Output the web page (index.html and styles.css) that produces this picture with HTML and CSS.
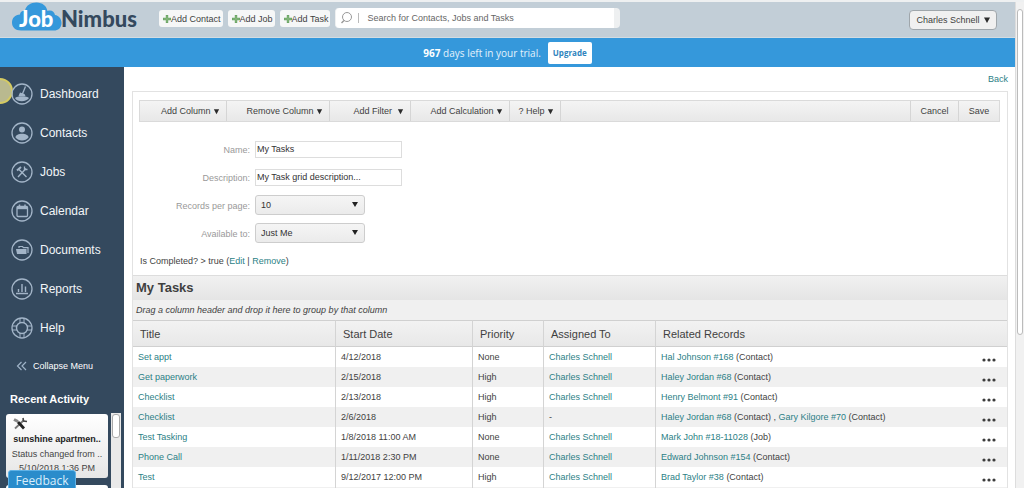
FILE: index.html
```html
<!DOCTYPE html>
<html lang="en">
<head>
<meta charset="utf-8">
<title>JobNimbus - My Tasks</title>
<link rel="stylesheet" href="styles.css">
</head>
<body>
<svg class="defs" aria-hidden="true">
  <symbol id="plus" viewBox="0 0 10 10"><path d="M5 0v10M0 5h10" stroke="#6aa564" stroke-width="3"/><path d="M5 1v8M1 5h8" stroke="#8fbc85" stroke-width="1"/></symbol>
  <symbol id="down" viewBox="0 0 8 8"><path d="M1 1.5h6L4 7z" fill="#2b2b2b"/></symbol>
  <symbol id="dots" viewBox="0 0 14 4"><g fill="#3c3c3c"><circle cx="2" cy="2" r="1.6"/><circle cx="7" cy="2" r="1.6"/><circle cx="12" cy="2" r="1.6"/></g></symbol>
</svg>
<div class="app">
  <div class="page">
    <header class="topbar">
      <a class="logo" href="#" aria-label="JobNimbus">
        <svg width="132" height="34" viewBox="0 0 132 34">
          <path d="M10 28.500C4 28.500 1 25 1 20.500C1 16 4 13 9 12.500C9 10 11 8.500 14 8.700C15 3.500 19.500 .5 25.500 .5C31.500 .5 35.500 4 36.500 9C40 7.500 43.500 9.500 44 13C48 13.500 50.500 17 50.500 21C50.500 26 47 28.500 43 28.500Z" fill="#3598db"/>
          <text class="logo-job" x="8" y="25">Job</text>
          <text class="logo-nimbus" x="50" y="25">Nimbus</text>
        </svg>
      </a>
      <div class="quick">
        <button class="quick-btn" type="button"><svg width="8" height="8"><use href="#plus"/></svg>Add Contact</button>
        <button class="quick-btn" type="button"><svg width="8" height="8"><use href="#plus"/></svg>Add Job</button>
        <button class="quick-btn" type="button"><svg width="8" height="8"><use href="#plus"/></svg>Add Task</button>
      </div>
      <label class="search">
        <svg width="22" height="14" viewBox="0 0 22 14" fill="none" stroke="#999"><circle cx="7" cy="6" r="4.500"/><path d="M4 9.500L1.500 12" stroke-width="1.500"/><path d="M18.500 2v10" stroke="#bbb"/></svg>
        <input type="text" placeholder="Search for Contacts, Jobs and Tasks" aria-label="Search">
      </label>
      <button class="user" type="button">Charles Schnell <svg width="8" height="8"><use href="#down"/></svg></button>
    </header>
    <div class="trial">
      <span><b>967</b> days left in your trial.</span>
      <button class="upgrade" type="button">Upgrade</button>
    </div>
    <div class="body">
      <aside class="sidebar">
        <span class="glow"></span>
        <nav class="nav">
          <a href="#"><svg class="ico" viewBox="0 0 22 22"><circle class="ring" cx="11" cy="11" r="10"/><path d="M14.500 3.500L11 12" stroke-width="1.300"/><path class="fill" d="M9 9.500l4.500 1.500 1 2H7.500zM4 15c2-2.500 12-2.500 14 0-2 4-12 4.500-14 0z"/></svg>Dashboard</a>
          <a href="#"><svg class="ico" viewBox="0 0 22 22"><circle class="ring" cx="11" cy="11" r="10"/><circle class="fill" cx="11" cy="7.500" r="3"/><path class="fill" d="M4.500 15.500c0-5 13-5 13 0-3 4-10 4-13 0z"/></svg>Contacts</a>
          <a href="#"><svg class="ico" viewBox="0 0 22 22"><circle class="ring" cx="11" cy="11" r="10"/><path d="M7 16l8-8.500M8 8.500l7.500 7.500" stroke-width="1.400"/><path d="M6 9.500l4-3.500" stroke-width="2"/><path d="M13.500 5.500v3h3" stroke-width="1.300"/></svg>Jobs</a>
          <a href="#"><svg class="ico" viewBox="0 0 22 22"><circle class="ring" cx="11" cy="11" r="10"/><rect x="6" y="6.500" width="10.500" height="10" rx="1" stroke-width="1.300"/><path d="M6 8h10.500" stroke-width="2.400"/><path d="M8.500 4.500v3M14 4.500v3" stroke-width="1.500"/></svg>Calendar</a>
          <a href="#"><svg class="ico" viewBox="0 0 22 22"><circle class="ring" cx="11" cy="11" r="10"/><path d="M8 9V7.500h3.500l1 1.200H17V14" stroke-width="1.200"/><path class="fill" d="M5 10h10.500v5H6z"/></svg>Documents</a>
          <a href="#"><svg class="ico" viewBox="0 0 22 22"><circle class="ring" cx="11" cy="11" r="10"/><path d="M5 15.500h12M7.500 14v-3M11 14V6M14.500 14V8.500" stroke-width="1.400"/></svg>Reports</a>
          <a href="#"><svg class="ico" viewBox="0 0 22 22"><circle class="ring" cx="11" cy="11" r="10"/><circle cx="11" cy="11" r="5.500" stroke-width="1.400"/><path d="M9 1.500v4.500M13 1.500v4.500M9 16v4.500M13 16v4.500M1.500 9H6M1.500 13H6M16 9h4.500M16 13h4.500"/></svg>Help</a>
        </nav>
        <button class="collapse" type="button"><svg width="11" height="10" viewBox="0 0 11 10" fill="none" stroke="#9fb3c8" stroke-width="1.200"><path d="M5.500 1L1.500 5l4 4M10 1L6 5l4 4"/></svg>Collapse Menu</button>
        <h2 class="recent">Recent Activity</h2>
        <div class="activity">
          <div class="cards">
            <article class="card">
              <svg width="16" height="13" viewBox="0 0 16 13" fill="none"><path d="M3 11.500L12 3" stroke="#777" stroke-width="1.800"/><path d="M2 2.500l4 2" stroke="#888" stroke-width="3"/><path d="M6 5l6 6.500" stroke="#222" stroke-width="2.800"/><path d="M11 1l.5 3 3.500.5" stroke="#444" stroke-width="1.600"/></svg>
              <b>sunshine apartmen..</b>
              <span class="what">Status changed from ..</span>
              <time>5/10/2018 1:36 PM</time>
            </article>
            <article class="card"></article>
          </div>
          <div class="track"><i class="thumb"></i></div>
        </div>
        <button class="feedback" type="button">Feedback</button>
      </aside>
      <main class="main">
        <div class="backrow"><a href="#">Back</a></div>
        <section class="panel">
          <div class="toolbar">
            <button class="w-column" type="button">Add Column <svg width="7" height="7"><use href="#down"/></svg></button>
            <button class="w-remove" type="button">Remove Column <svg width="7" height="7"><use href="#down"/></svg></button>
            <button class="w-filter" type="button">Add Filter &nbsp;<svg width="7" height="7"><use href="#down"/></svg></button>
            <button class="w-calc" type="button">Add Calculation <svg width="7" height="7"><use href="#down"/></svg></button>
            <button class="w-help" type="button">? Help <svg width="7" height="7"><use href="#down"/></svg></button>
            <span class="spacer"></span>
            <button class="cancel" type="button">Cancel</button>
            <button class="save" type="button">Save</button>
          </div>
          <form class="form">
            <label for="name">Name:</label><input id="name" type="text" value="My Tasks">
            <label for="desc">Description:</label><input id="desc" type="text" value="My Task grid description...">
            <label for="per">Records per page:</label><span class="pick"><select id="per"><option>10</option></select></span>
            <label for="avail">Available to:</label><span class="pick"><select id="avail"><option>Just Me</option></select></span>
          </form>
          <p class="filter">Is Completed? &gt; true (<a href="#">Edit</a> | <a href="#">Remove</a>)</p>
          <h1 class="title">My Tasks</h1>
          <p class="group">Drag a column header and drop it here to group by that column</p>
          <table class="grid">
            <colgroup><col class="c-title"><col class="c-date"><col class="c-prio"><col class="c-who"><col><col class="c-more"></colgroup>
            <thead><tr><th>Title</th><th>Start Date</th><th>Priority</th><th>Assigned To</th><th colspan="2">Related Records</th></tr></thead>
            <tbody>
              <tr><td><a href="#">Set appt</a></td><td>4/12/2018</td><td>None</td><td><a href="#">Charles Schnell</a></td><td><a href="#">Hal Johnson #168</a> (Contact)</td><td><button class="more" type="button" aria-label="More"><svg width="14" height="4"><use href="#dots"/></svg></button></td></tr>
              <tr><td><a href="#">Get paperwork</a></td><td>2/15/2018</td><td>High</td><td><a href="#">Charles Schnell</a></td><td><a href="#">Haley Jordan #68</a> (Contact)</td><td><button class="more" type="button" aria-label="More"><svg width="14" height="4"><use href="#dots"/></svg></button></td></tr>
              <tr><td><a href="#">Checklist</a></td><td>2/13/2018</td><td>High</td><td><a href="#">Charles Schnell</a></td><td><a href="#">Henry Belmont #91</a> (Contact)</td><td><button class="more" type="button" aria-label="More"><svg width="14" height="4"><use href="#dots"/></svg></button></td></tr>
              <tr><td><a href="#">Checklist</a></td><td>2/6/2018</td><td>High</td><td>-</td><td><a href="#">Haley Jordan #68</a> (Contact) , <a href="#">Gary Kilgore #70</a> (Contact)</td><td><button class="more" type="button" aria-label="More"><svg width="14" height="4"><use href="#dots"/></svg></button></td></tr>
              <tr><td><a href="#">Test Tasking</a></td><td>1/8/2018 11:00 AM</td><td>None</td><td><a href="#">Charles Schnell</a></td><td><a href="#">Mark John #18-11028</a> (Job)</td><td><button class="more" type="button" aria-label="More"><svg width="14" height="4"><use href="#dots"/></svg></button></td></tr>
              <tr><td><a href="#">Phone Call</a></td><td>1/11/2018 2:30 PM</td><td>None</td><td><a href="#">Charles Schnell</a></td><td><a href="#">Edward Johnson #154</a> (Contact)</td><td><button class="more" type="button" aria-label="More"><svg width="14" height="4"><use href="#dots"/></svg></button></td></tr>
              <tr><td><a href="#">Test</a></td><td>9/12/2017 12:00 PM</td><td>High</td><td><a href="#">Charles Schnell</a></td><td><a href="#">Brad Taylor #38</a> (Contact)</td><td><button class="more" type="button" aria-label="More"><svg width="14" height="4"><use href="#dots"/></svg></button></td></tr>
              <tr><td></td><td></td><td></td><td></td><td></td><td></td></tr>
            </tbody>
          </table>
        </section>
      </main>
    </div>
  </div>
  <div class="scroll"><i></i></div>
</div>
</body>
</html>
```
FILE: styles.css
```css
* { box-sizing: border-box; }
body { margin: 0; font: 9px/12px "Liberation Sans", Arial, sans-serif; color: #3f3f3f; background: #fff; }
button, input, select { font: inherit; color: inherit; margin: 0; }
button { padding: 0; border: 0; background: none; white-space: nowrap; }
a { color: #2c7f86; text-decoration: none; }
h1, h2, p { margin: 0; }
.defs { position: absolute; width: 0; height: 0; }

.app { display: flex; height: 100vh; overflow: hidden; border-top: 2px solid #eef0f1; }
.page { flex: 1; min-width: 0; display: flex; flex-direction: column; }
.scroll { width: 9px; padding: 7px 1px 0; background: #f1f1f1; border-left: 1px solid #ddd; }
.scroll i { display: block; height: 68%; border: 1px solid #bbb; border-radius: 4px; background: #fff; }

.topbar { display: flex; align-items: flex-start; height: 36px; flex: none; padding: 0 18px 0 11px; background: #c2ced7; border-bottom: 1px solid #d3dce2; }
.logo { width: 148px; height: 34px; }
.logo svg { display: block; }
.logo-job, .logo-nimbus { font: 900 22px Lato, sans-serif; }
.logo-job { fill: #fff; }
.logo-nimbus { fill: #34495e; }
.quick { display: flex; gap: 5px; padding-top: 8px; }
.quick-btn { display: flex; align-items: center; height: 17px; padding: 0 2px 0 4px; border-radius: 3px; background: #f6f7f7; }
.search { display: flex; align-items: center; flex: none; width: 285px; height: 20px; margin: 6px 0 0 5px; padding: 0 6px 0 4px; border-radius: 4px; background: #fff; border-right: 6px solid #eef0f1; border-left: 1px solid #eef0f1; }
.search input { flex: 1; border: 0; outline: 0; background: none; padding: 0 0 0 5px; }
.search input::placeholder { color: #666; }
.user { height: 20px; margin: 8px 0 0 auto; padding: 0 5px 0 6px; border: 1px solid #9fa6ab; border-radius: 4px; background: #f0f0f0; }
.user svg { margin-left: 1px; vertical-align: -1px; }

.trial { display: flex; flex: none; justify-content: center; align-items: center; gap: 7px; height: 29px; background: #3598db; color: #e4f2fc; font: 10px/14px "Open Sans", sans-serif; }
.trial b { color: #fff; }
.upgrade { height: 22px; padding: 0 5px; border-radius: 2px; background: #fff; color: #2f84bd; font: bold 8px/14px "Open Sans", sans-serif; }

.body { display: flex; flex: 1; min-height: 0; }
.sidebar { position: relative; flex: none; display: flex; flex-direction: column; width: 124px; padding-top: 7px; background: #34495e; color: #fff; overflow: hidden; }
.glow { position: absolute; left: -13px; top: 11px; width: 26px; height: 26px; border-radius: 50%; border: 2px solid #d5cb62; background: #b9b98f; }
.nav a { position: relative; display: flex; align-items: center; gap: 7px; height: 39px; padding-left: 11px; color: #f2f5f8; font-size: 12px; line-height: 16px; }
.ico { width: 22px; height: 22px; fill: none; stroke: #a3b5c8; }
.ico .ring { stroke-width: 1.300; }
.ico .fill { fill: #a3b5c8; stroke: none; }
.collapse { display: flex; align-items: center; gap: 6px; flex: none; height: 38px; padding-left: 16px; }
.recent { flex: none; padding-left: 10px; font-size: 11px; line-height: 28px; }
.activity { display: flex; flex: 1; min-height: 0; gap: 3px; padding: 0 3px 0 6px; }
.cards { flex: 1; min-width: 0; padding-top: 1px; }
.card { display: flex; flex-direction: column; height: 64px; margin-bottom: 7px; padding: 3px 6px; border-radius: 3px; background: linear-gradient(#fff, #e6e6e6); color: #444; white-space: nowrap; }
.card b, .card time { align-self: center; }
.card svg { flex: none; }
.card b { padding-top: 2px; line-height: 14px; color: #222; }
.card .what { align-self: center; line-height: 16px; }
.track { width: 10px; background: #e9e9e9; padding: 1px; }
.thumb { display: block; height: 24px; border: 1px solid #aaa; border-radius: 3px; background: #fff; }
.feedback { position: absolute; left: 8px; bottom: -3px; width: 68px; height: 21px; border: 1px solid #5fb2e6; border-radius: 3px; background: #2a8ccb; color: #d9eefb; font: 12px/18px "Open Sans", sans-serif; }

.main { flex: 1; min-width: 0; padding: 0 7px 0 8px; }
.backrow { height: 24px; line-height: 24px; text-align: right; }
.panel { border: 1px solid #e2e2e2; }
.toolbar { display: flex; height: 22px; margin: 8px 7px 0 6px; border: 1px solid #dadada; background: linear-gradient(#f4f4f4, #e8e8e8); }
.toolbar button { padding-right: 6px; border-right: 1px solid #d5d5d5; text-align: right; }
.toolbar svg { vertical-align: -1px; }
.w-column { width: 87px; }
.w-remove { width: 103px; }
.w-filter { width: 81px; }
.w-calc { width: 99px; }
.w-help { width: 51px; }
.spacer { flex: 1; }
.toolbar .cancel { width: 49px; border-left: 1px solid #d5d5d5; text-align: center; padding: 0; }
.toolbar .save { width: 40px; border: 0; text-align: center; padding: 0; }

.form { display: grid; grid-template-columns: 117px 147px; grid-auto-rows: 28px; column-gap: 5px; align-items: center; padding: 13px 0 0; color: #333; }
.form label { padding-top: 2px; text-align: right; color: #999; }
.form input { width: 100%; height: 17px; padding: 0 1px; border: 1px solid #ddd; }
.pick { position: relative; width: 110px; height: 20px; }
.pick select { width: 100%; height: 100%; padding: 0 5px; appearance: none; border: 1px solid #cdcdcd; border-radius: 3px; background: linear-gradient(#f5f5f5, #ebebeb); }
.pick::after { content: ""; position: absolute; right: 7px; top: 7px; border: 3px solid transparent; border-top: 5px solid #222; border-bottom: 0; pointer-events: none; }
.filter { padding-left: 7px; line-height: 28px; }
.title { padding-left: 3px; border-top: 1px solid #ddd; background: linear-gradient(#f1f1f1, #e5e5e5); font-size: 13px; line-height: 24px; }
.group { padding-left: 3px; background: #f0f0f0; font-style: italic; line-height: 20px; }

.grid { width: 100%; table-layout: fixed; border-collapse: separate; border-spacing: 0; }
.c-title { width: 203px; }
.c-date { width: 137px; }
.c-prio { width: 71px; }
.c-who { width: 112px; }
.c-more { width: 34px; }
.grid th { height: 27px; padding: 0 0 0 7px; border-top: 1px solid #d0d0d0; border-bottom: 1px solid #d0d0d0; background: linear-gradient(#f2f2f2, #e8e8e8); font-size: 11px; font-weight: normal; text-align: left; }
.grid td { height: 20px; padding: 0 0 0 5px; white-space: nowrap; }
.grid th:nth-child(-n+4), .grid td:nth-child(-n+4) { border-right: 1px solid #d4d4d4; }
.grid tbody tr:nth-child(even) { background: #f0f0f0; }
.more { display: block; padding: 6px 0 0 4px; }
.more svg { display: block; }
```
